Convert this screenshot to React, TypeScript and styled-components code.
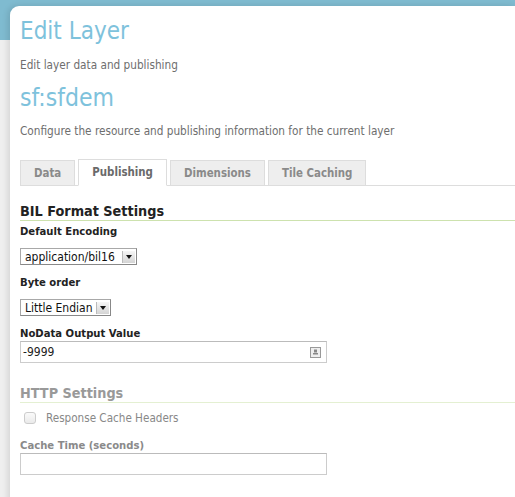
import React from "react";
import styled, { createGlobalStyle } from "styled-components";

const Global = createGlobalStyle`
  html, body { margin: 0; padding: 0; }
  body {
    background: linear-gradient(#7fbbd0 0, #7fbbd0 40px, #efefef 40px);
    font-family: "DejaVu Sans Condensed", "DejaVu Sans", Verdana, sans-serif;
    font-stretch: condensed;
    min-height: 497px;
    overflow: hidden;
  }
`;

const Card = styled.div`
  margin: 6px 0 0 10px;
  background: #fff;
  border-radius: 9px 0 0 0;
  box-shadow: -2px 0 6px rgba(0, 0, 0, 0.12);
  padding: 10px 0 30px 10px;
  min-height: 460px;
`;

const Title = styled.h1`
  margin: 0;
  font-weight: normal;
  font-size: 24px;
  line-height: 30px;
  color: #7ec2dc;
`;

const Sub = styled.p`
  margin: 12px 0 0;
  font-size: 11.7px;
  color: #6e6e6e;
  line-height: 14px;
`;

const LayerName = styled.h2`
  margin: 12px 0 0;
  font-weight: normal;
  font-size: 24.5px;
  line-height: 28px;
  color: #7ec2dc;
`;

const Tabs = styled.div`
  display: flex;
  align-items: flex-end;
  gap: 3px;
  margin-top: 21px;
  border-bottom: 1px solid #ddd;
`;

const Tab = styled.div<{ $active?: boolean }>`
  font-size: 11.4px;
  font-weight: bold;
  color: ${(p) => (p.$active ? "#6a6a6a" : "#8a8a8a")};
  background: ${(p) => (p.$active ? "#fff" : "#eee")};
  border: 1px solid #ddd;
  border-bottom: ${(p) => (p.$active ? "1px solid #fff" : "none")};
  margin-bottom: ${(p) => (p.$active ? "-1px" : "0")};
  padding: 0 13px;
  height: ${(p) => (p.$active ? "25px" : "24px")};
  line-height: 25px;
`;

const Section = styled.div<{ $gap: number }>`
  margin-top: ${(p) => p.$gap}px;
`;

const SectionTitle = styled.h3<{ $muted?: boolean }>`
  margin: 0;
  font-size: 14.3px;
  line-height: 18px;
  font-weight: bold;
  color: ${(p) => (p.$muted ? "#999" : "#222")};
  border-bottom: 1px solid ${(p) => (p.$muted ? "#e4f0d2" : "#cde2ae")};
`;

const Label = styled.div<{ $muted?: boolean }>`
  font-size: 11.2px;
  font-weight: bold;
  color: ${(p) => (p.$muted ? "#8a8a8a" : "#222")};
  line-height: 14px;
  margin-top: 4px;
`;

const Field = styled.div`
  display: flex;
  margin: 9px 0 11px;
`;

const SelectBox = styled.div<{ $w: number }>`
  display: flex;
  align-items: center;
  justify-content: space-between;
  width: ${(p) => p.$w}px;
  height: 17px;
  box-sizing: border-box;
  border: 1px solid #a8a8a8;
  border-right-color: #888;
  border-bottom-color: #888;
  background: #fff;
  font-size: 12px;
  color: #111;
  padding-left: 4px;
`;

const Arrow = styled.span`
  width: 12px;
  height: 12px;
  margin-right: 1px;
  background: linear-gradient(#f6f6f6, #d4d4d4);
  border-left: 1px solid #bbb;
  display: flex;
  align-items: center;
  justify-content: center;
  &::after {
    content: "";
    border-left: 3px solid transparent;
    border-right: 3px solid transparent;
    border-top: 4px solid #111;
  }
`;

const Input = styled.div`
  width: 307px;
  height: 22px;
  box-sizing: border-box;
  border: 1px solid #ccc;
  border-top-color: #bbb;
  display: flex;
  align-items: center;
  justify-content: space-between;
  padding: 0 5px 0 2px;
  font-size: 12px;
  color: #222;
`;

const Check = styled.div`
  display: flex;
  align-items: center;
  gap: 10px;
  margin: 8px 0 14px 4px;
  font-size: 11.6px;
  line-height: 14px;
  color: #888;
`;

const Box = styled.span`
  width: 10px;
  height: 10px;
  border: 1px solid #ccc;
  border-radius: 3px;
  background: linear-gradient(#fafafa, #eaeaea);
`;

function FieldIcon() {
  return (
    <svg width="11" height="11" viewBox="0 0 11 11">
      <rect x="0.5" y="0.5" width="10" height="10" fill="#eee" stroke="#999" />
      <rect x="4" y="2.5" width="3" height="3" fill="#888" />
      <rect x="3" y="6" width="5" height="1.5" fill="#888" />
    </svg>
  );
}

export default function App() {
  return (
    <>
      <Global />
      <Card>
        <Title>Edit Layer</Title>
        <Sub>Edit layer data and publishing</Sub>
        <LayerName>sf:sfdem</LayerName>
        <Sub>Configure the resource and publishing information for the current layer</Sub>
        <Tabs>
          <Tab>Data</Tab>
          <Tab $active>Publishing</Tab>
          <Tab>Dimensions</Tab>
          <Tab>Tile Caching</Tab>
        </Tabs>
        <Section $gap={16}>
          <SectionTitle>BIL Format Settings</SectionTitle>
          <Label>Default Encoding</Label>
          <Field>
            <SelectBox $w={117}>
              application/bil16 <Arrow />
            </SelectBox>
          </Field>
          <Label>Byte order</Label>
          <Field>
            <SelectBox $w={91}>
              Little Endian <Arrow />
            </SelectBox>
          </Field>
          <Label>NoData Output Value</Label>
          <Input>
            -9999 <FieldIcon />
          </Input>
        </Section>
        <Section $gap={21}>
          <SectionTitle $muted>HTTP Settings</SectionTitle>
          <Check>
            <Box />
            Response Cache Headers
          </Check>
          <Label $muted>Cache Time (seconds)</Label>
          <Input />
        </Section>
      </Card>
    </>
  );
}
